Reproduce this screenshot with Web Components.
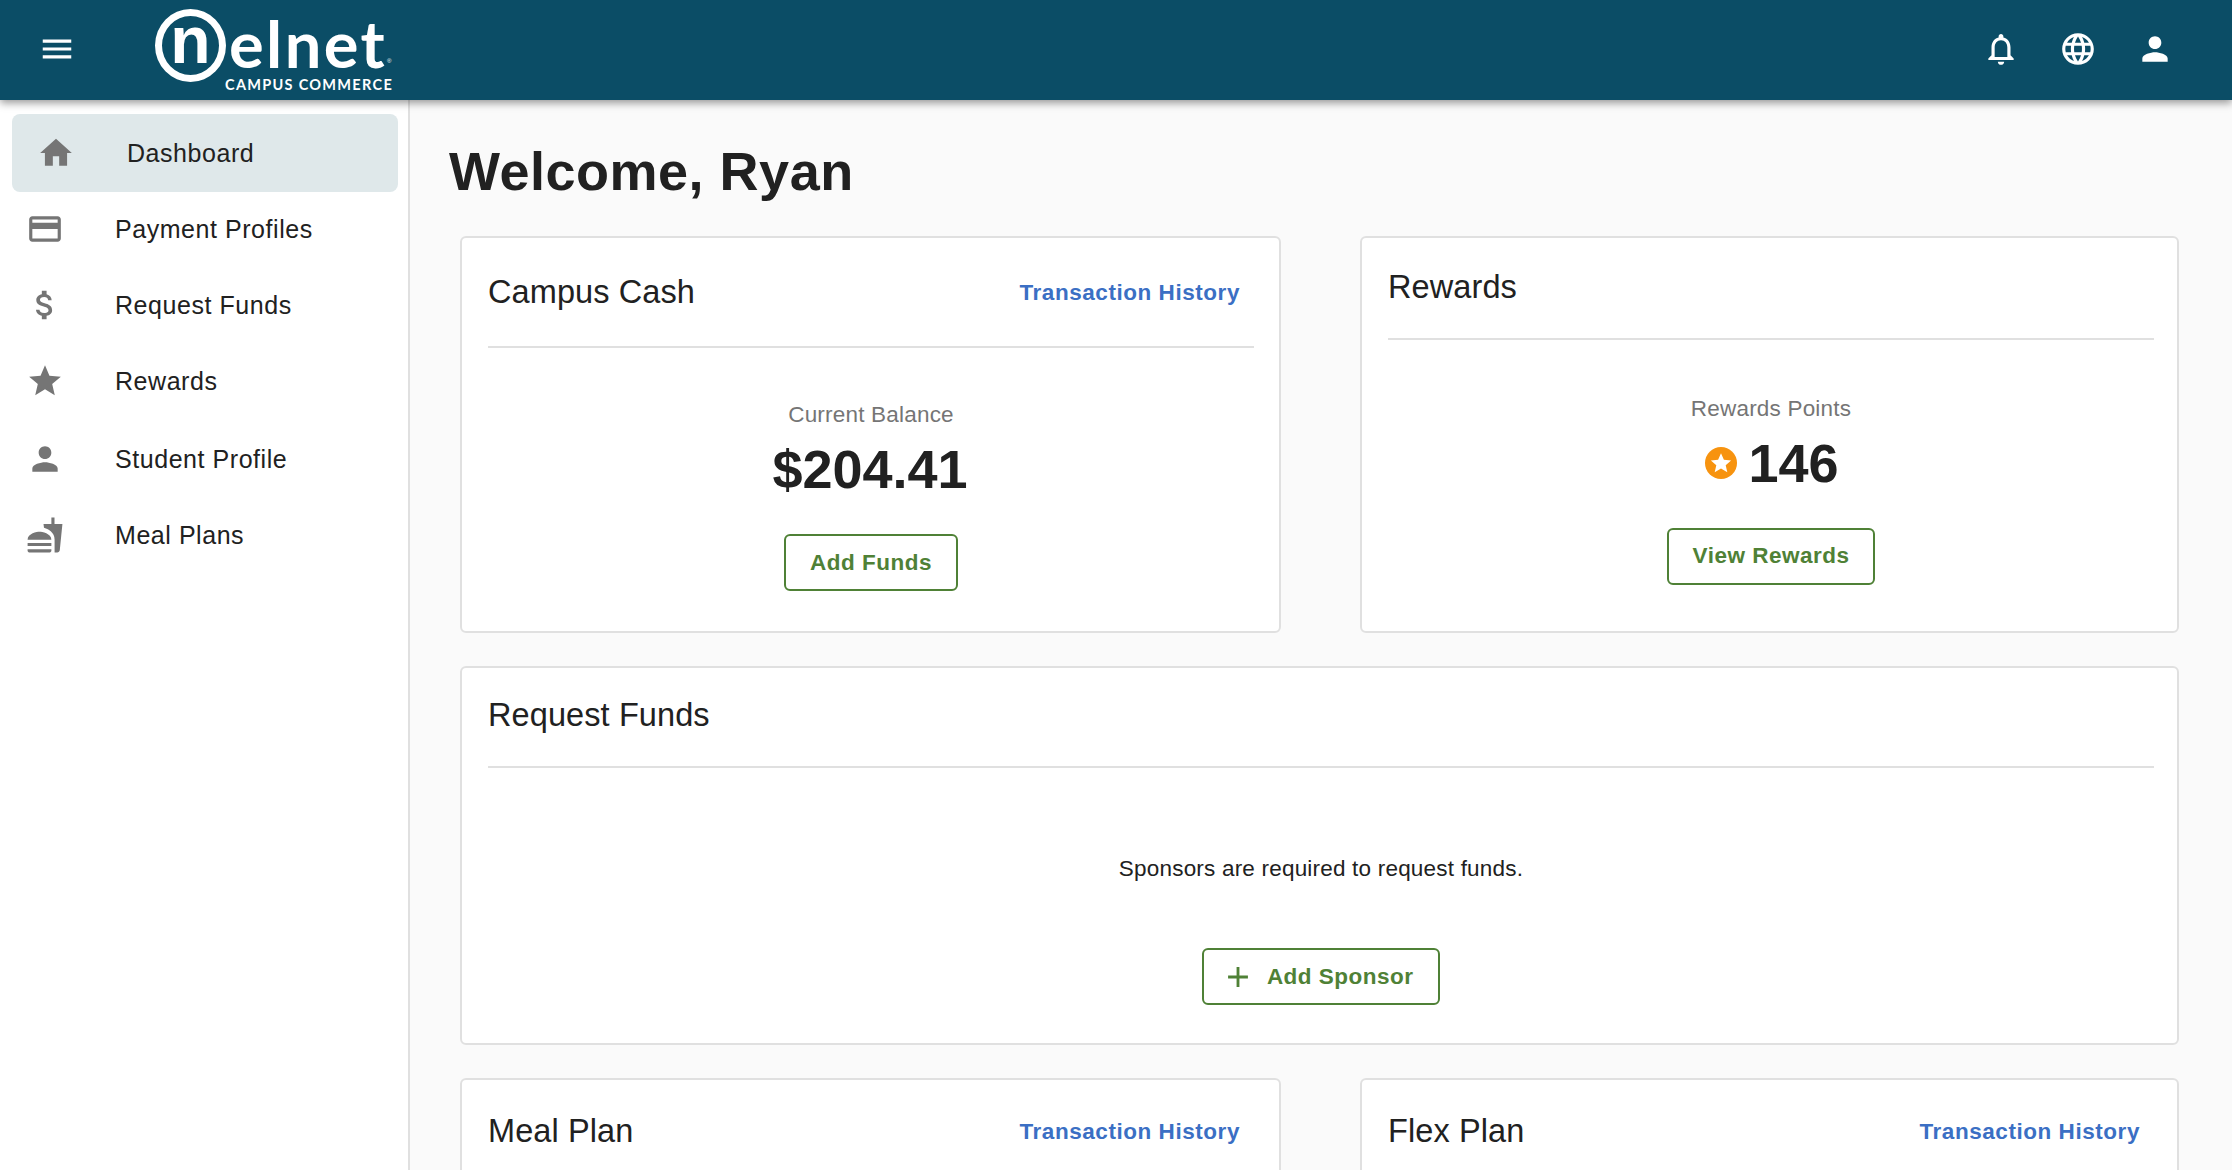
<!DOCTYPE html>
<html><head><meta charset="utf-8">
<style>
html,body{margin:0;height:100%;overflow:hidden;background:#fafafa;font-family:"Liberation Sans",Arial,sans-serif;color:#212121}
</style></head><body>
<app-shell>
  <top-bar slot="top"></top-bar>
  <side-nav slot="side">
    <nav-item icon="home" active style="margin-bottom:-1px">Dashboard</nav-item>
    <nav-item icon="card">Payment Profiles</nav-item>
    <nav-item icon="money">Request Funds</nav-item>
    <nav-item icon="star">Rewards</nav-item>
    <nav-item icon="person" style="margin-top:2px">Student Profile</nav-item>
    <nav-item icon="food">Meal Plans</nav-item>
  </side-nav>
  <dash-page heading="Welcome, Ryan">
    <info-card style="--hh:110px;--pl:26px;--pr:25px" heading="Campus Cash" link="Transaction History">
      <stat-block style="--top:53px;--gap1:5px;--gap2:30px" label="Current Balance" value="$204.41" action="Add Funds"></stat-block>
    </info-card>
    <info-card style="--hh:101.5px;--pl:26px;--pr:23px" heading="Rewards">
      <stat-block style="--top:55px;--gap1:5px;--gap2:30px" label="Rewards Points" value="146" action="View Rewards" badge></stat-block>
    </info-card>
    <info-card class="wide" style="--hh:100px;--hb:3px;--pl:26px;--pr:23px" heading="Request Funds">
      <sponsor-block></sponsor-block>
    </info-card>
    <info-card style="--hh:110px;--hb:6px;--pl:26px;--pr:25px" heading="Meal Plan" link="Transaction History"></info-card>
    <info-card style="--hh:110px;--hb:6px;--pl:26px;--pr:23px" heading="Flex Plan" link="Transaction History"></info-card>
  </dash-page>
</app-shell>
<script>
const P={
menu:'M3 18h18v-2H3v2zm0-5h18v-2H3v2zm0-7v2h18V6H3z',
bell:'M12 22c1.1 0 2-.9 2-2h-4c0 1.1.89 2 2 2zm6-6v-5c0-3.07-1.64-5.64-4.5-6.32V4c0-.83-.67-1.5-1.5-1.5s-1.5.67-1.5 1.5v.68C7.63 5.36 6 7.92 6 11v5l-2 2v1h16v-1l-2-2zm-2 1H8v-6c0-2.48 1.51-4.5 4-4.5s4 2.02 4 4.5v6z',
globe:'M11.99 2C6.47 2 2 6.48 2 12s4.47 10 9.99 10C17.52 22 22 17.52 22 12S17.52 2 11.99 2zm6.93 6h-2.95c-.32-1.25-.78-2.45-1.38-3.56 1.84.63 3.37 1.91 4.33 3.56zM12 4.04c.83 1.2 1.48 2.53 1.91 3.96h-3.82c.43-1.43 1.08-2.76 1.91-3.96zM4.26 14C4.1 13.36 4 12.69 4 12s.1-1.36.26-2h3.38c-.08.66-.14 1.32-.14 2 0 .68.06 1.34.14 2H4.26zm.82 2h2.95c.32 1.25.78 2.45 1.38 3.56-1.84-.63-3.37-1.9-4.33-3.56zm2.95-8H5.08c.96-1.66 2.49-2.93 4.33-3.56C8.81 5.55 8.35 6.75 8.03 8zM12 19.96c-.83-1.2-1.48-2.53-1.91-3.96h3.82c-.43 1.43-1.08 2.76-1.91 3.96zM14.34 14H9.66c-.09-.66-.16-1.32-.16-2 0-.68.07-1.35.16-2h4.68c.09.65.16 1.32.16 2 0 .68-.07 1.34-.16 2zm.25 5.56c.6-1.11 1.06-2.31 1.38-3.56h2.95c-.96 1.65-2.49 2.93-4.33 3.56zM16.36 14c.08-.66.14-1.32.14-2 0-.68-.06-1.34-.14-2h3.38c.16.64.26 1.31.26 2s-.1 1.36-.26 2h-3.38z',
person:'M12 12c2.21 0 4-1.79 4-4s-1.79-4-4-4-4 1.79-4 4 1.79 4 4 4zm0 2c-2.67 0-8 1.34-8 4v2h16v-2c0-2.66-5.33-4-8-4z',
home:'M10 20v-6h4v6h5v-8h3L12 3 2 12h3v8z',
card:'M20 4H4c-1.11 0-1.99.89-1.99 2L2 18c0 1.11.89 2 2 2h16c1.11 0 2-.89 2-2V6c0-1.11-.89-2-2-2zm0 14H4v-6h16v6zm0-10H4V6h16v2z',
money:'M11.8 10.9c-2.27-.59-3-1.2-3-2.15 0-1.09 1.01-1.85 2.7-1.85 1.78 0 2.44.85 2.5 2.1h2.21c-.07-1.72-1.12-3.3-3.21-3.81V3h-3v2.16c-1.94.42-3.5 1.68-3.5 3.61 0 2.31 1.91 3.46 4.7 4.13 2.5.6 3 1.48 3 2.41 0 .69-.49 1.79-2.7 1.79-2.06 0-2.87-.92-2.98-2.1h-2.2c.12 2.19 1.76 3.42 3.68 3.83V21h3v-2.15c1.95-.37 3.5-1.5 3.5-3.55 0-2.84-2.43-3.81-4.7-4.4z',
star:'M12 17.27L18.18 21l-1.64-7.03L22 9.24l-7.19-.61L12 2 9.19 8.63 2 9.24l5.46 4.73L5.82 21z',
food:'M18.06 22.99h1.66c.84 0 1.53-.64 1.63-1.46L23 5.05h-5V1h-1.97v4.05h-4.97l.3 2.34c1.71.47 3.31 1.32 4.27 2.26 1.44 1.42 2.43 2.89 2.43 5.29v8.05zM1 21.99V21h15.03v.99c0 .55-.45 1-1.01 1H2.01c-.56 0-1.01-.45-1.01-1zm15.03-7c0-4-6.03-5-7.52-5C7 9.99 1 10.99 1 14.99h15.03zM1.02 17h15v2h-15z',
plus:'M19 13h-6v6h-2v-6H5v-2h6V5h2v6h6v2z'
};
const svg=(n,s,c='currentColor')=>`<svg width="${s}" height="${s}" viewBox="0 0 24 24" fill="${c}" aria-hidden="true"><path d="${P[n]}"/></svg>`;
class Base extends HTMLElement{
  render(h){ if(!this.shadowRoot) this.attachShadow({mode:'open'}); this.shadowRoot.innerHTML=h; }
}
customElements.define('app-shell',class extends Base{connectedCallback(){this.render(`<style>
:host{display:grid;grid-template-rows:100px 1fr;grid-template-columns:410px 1fr;height:1170px;overflow:hidden}
.top{grid-column:1/3;display:block;position:relative;z-index:2}
.side{display:block;min-height:0}.main{min-width:0;overflow:hidden}
</style><div class="top"><slot name="top"></slot></div><div class="side"><slot name="side"></slot></div><div class="main"><slot></slot></div>`)}});
customElements.define('top-bar',class extends Base{connectedCallback(){this.render(`<style>
:host{display:flex;align-items:flex-start;height:100px;background:#0b4d66;color:#fff;box-shadow:0 3px 8px rgba(0,0,0,.4)}
.menu{margin-left:38px;display:flex;margin-top:30px}
.logo{margin-left:79px;padding-top:9px;display:flex;flex-direction:column;width:240px}
.mark{display:flex;align-items:flex-start;height:71px}
.ring{box-sizing:border-box;width:71px;height:73px;border:7px solid #fff;border-radius:50%;display:flex;justify-content:center;flex:none}
.n{font:700 66px/59px "Liberation Sans",sans-serif;display:block;margin-top:-5px;height:59px}
.word{font:700 65px/54px Lato,sans-serif;height:54px;letter-spacing:2.4px;margin-left:3px;margin-top:7px;white-space:nowrap}
.reg{font:400 6px/1 "Liberation Sans",sans-serif;margin-top:49px;margin-left:0}
.sub{font:700 14.5px/15px Lato,sans-serif;letter-spacing:1.3px;margin:-3px 0 0 70px;white-space:nowrap}
.icons{margin-left:auto;margin-right:58px;display:flex;gap:39px;margin-top:30px}
.icons svg{display:block}
</style><span class="menu">${svg('menu',38)}</span>
<div class="logo"><div class="mark"><span class="ring"><span class="n">n</span></span><span class="word">elnet</span><span class="reg">®</span></div><div class="sub">CAMPUS COMMERCE</div></div>
<div class="icons">${svg('bell',38)}${svg('globe',38)}${svg('person',38)}</div>`)}});
customElements.define('side-nav',class extends Base{connectedCallback(){this.render(`<style>
:host{display:flex;flex-direction:column;height:100%;box-sizing:border-box;background:#fff;border-right:2px solid #e0e0e0;padding-top:14px}
</style><slot></slot>`)}});
customElements.define('nav-item',class extends Base{connectedCallback(){const a=this.hasAttribute('active');this.render(`<style>
:host{display:flex;align-items:center;height:${a?78:76}px;flex:none;box-sizing:border-box;font-size:25px;letter-spacing:.55px;color:#212121;
${a?'margin:0 10px 0 12px;padding-left:25px;background:#dfe8ea;border-radius:8px;':'padding-left:26px;'}}
.i{width:38px;height:38px;color:#757575;flex:none}svg{display:block}
.t{margin-left:${a?52:51}px}
</style><span class="i">${svg(this.getAttribute('icon'),38)}</span><span class="t"><slot></slot></span>`)}});
customElements.define('dash-page',class extends Base{connectedCallback(){this.render(`<style>
:host{display:block;padding:0 53px 0 50px}
h1{font:700 54px/70px "Liberation Sans",sans-serif;margin:36px 0 30px -11px;color:#212121;letter-spacing:.5px}
.grid{display:grid;grid-template-columns:821px 819px;column-gap:79px;row-gap:33px}
::slotted(.wide){grid-column:1/3}
</style><h1>${this.getAttribute('heading')}</h1><div class="grid"><slot></slot></div>`)}});
customElements.define('info-card',class extends Base{connectedCallback(){const l=this.getAttribute('link');this.render(`<style>
:host{display:block;box-sizing:border-box;background:#fff;border:2px solid #e0e0e0;border-radius:6px;padding:0 var(--pr,25px) 0 var(--pl,25px);min-height:100px}
header{display:flex;align-items:center;justify-content:space-between;box-sizing:border-box;height:var(--hh,100px);padding-bottom:var(--hb,0);border-bottom:2px solid #e0e0e0}
h2{font:400 32.5px/1.2 "Liberation Sans",sans-serif;margin:0;letter-spacing:.1px;color:#212121}
a{font:700 22.5px/1 "Liberation Sans",sans-serif;letter-spacing:.55px;color:#3b6fc4;margin:2px 14px 0 0}
</style><header><h2>${this.getAttribute('heading')}</h2>${l?`<a>${l}</a>`:''}</header><slot></slot>`)}});
customElements.define('stat-block',class extends Base{connectedCallback(){const b=this.hasAttribute('badge');this.render(`<style>
:host{display:flex;flex-direction:column;align-items:center;padding-top:var(--top);height:283px;box-sizing:border-box}
.l{font-size:22.5px;line-height:28px;color:#757575;letter-spacing:.2px}
.v{font-weight:700;font-size:54px;line-height:70px;margin-top:var(--gap1);display:flex;align-items:center;gap:11px;color:#212121;${b?'padding-left:2px;':'padding-right:2px;'}}
.b{width:32px;height:32px;display:block}
out-btn{margin-top:var(--gap2)}
</style><div class="l">${this.getAttribute('label')}</div><div class="v">${b?`<svg class="b" viewBox="0 0 32 32"><circle cx="16" cy="16" r="16" fill="#f7930f"/><path fill="#fff" d="M16 6.2l2.9 6.6 7.2.7-5.4 4.7 1.6 7-6.3-3.7-6.3 3.7 1.6-7-5.4-4.7 7.2-.7z"/></svg>`:''}${this.getAttribute('value')}</div><out-btn>${this.getAttribute('action')}</out-btn>`)}});
customElements.define('sponsor-block',class extends Base{connectedCallback(){this.render(`<style>
:host{display:flex;flex-direction:column;align-items:center;padding-top:87px;height:275px;box-sizing:border-box}
p{margin:0;font-size:22.5px;line-height:28px;letter-spacing:.2px;color:#212121}
out-btn{margin-top:65px}
</style><p>Sponsors are required to request funds.</p><out-btn plus>Add Sponsor</out-btn>`)}});
customElements.define('out-btn',class extends Base{connectedCallback(){const p=this.hasAttribute('plus');this.render(`<style>
:host{display:inline-flex;align-items:center;justify-content:center;box-sizing:border-box;height:57px;padding:0 24px;border:2.5px solid #4f8136;border-radius:6px;color:#4f8136;font-weight:700;font-size:22.5px;letter-spacing:.5px;background:#fff}
svg{display:block;margin-right:12px;margin-left:-7.5px}
</style>${p?svg('plus',34):''}<slot></slot>`)}});
</script>
</body></html>
